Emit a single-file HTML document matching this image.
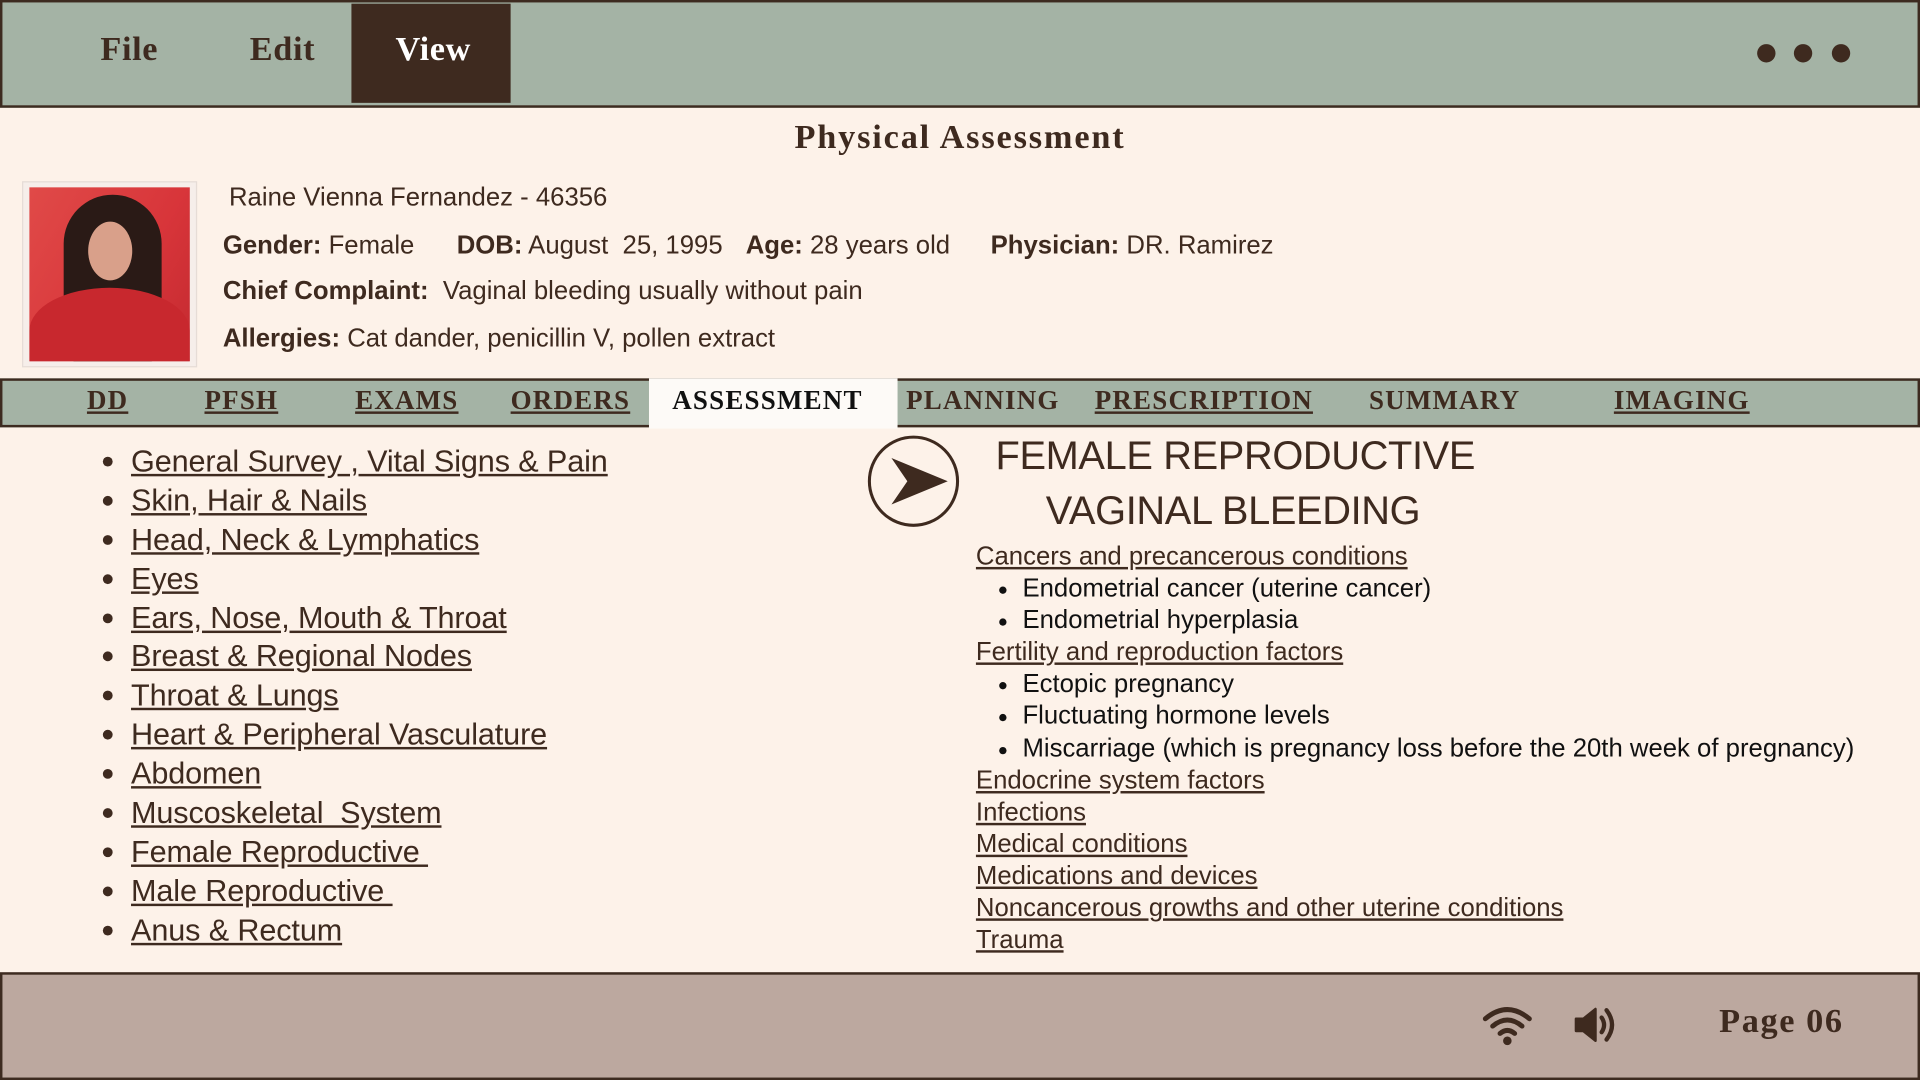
<!DOCTYPE html>
<html><head><meta charset="utf-8"><style>
*{margin:0;padding:0;box-sizing:border-box}
html,body{width:1920px;height:1080px;overflow:hidden;background:#fdf2e9}
#w{position:absolute;left:0;top:0;width:1568px;height:882px;transform:scale(1.22449);transform-origin:0 0;background:#fdf2e9;color:#3e2a1f;font-family:"Liberation Sans",sans-serif}
.a{position:absolute;white-space:nowrap}
.s{font-family:"Liberation Serif",serif;font-weight:bold}
.hdr{position:absolute;left:0;top:0;width:1568px;height:88px;background:#a4b3a5;border:2px solid #3d2b20}
.m{font-size:28px;top:25px;letter-spacing:0.5px}
.dot{position:absolute;width:15px;height:15px;border-radius:50%;background:#3e2a1f;top:36px}
.t{font-size:21px;letter-spacing:0}
.tabs{position:absolute;left:0;top:309px;width:1568px;height:40px;background:#a4b3a5;border:2px solid #3d2b20}
.tb{font-size:22px;top:314px;text-decoration:underline;letter-spacing:1px}
ul.l{position:absolute;left:107px;top:362px;list-style:none}
ul.l li{font-size:25px;height:31.9px;line-height:31px;text-decoration:underline;letter-spacing:-0.1px;position:relative}
ul.l li:before{content:"";position:absolute;left:-23px;top:11px;width:8px;height:8px;border-radius:50%;background:#3e2a1f}
.r{position:absolute;left:797px;top:442px;font-size:21px;letter-spacing:0}
.r div{height:26.1px;line-height:26px}
.r .u{text-decoration:underline}
.r .b{padding-left:38px;position:relative;color:#111}
.r .b:before{content:"";position:absolute;left:19px;top:11px;width:6px;height:6px;border-radius:50%;background:#111}
.ftr{position:absolute;left:0;top:794px;width:1568px;height:88px;background:#bca89f;border:2px solid #3d2b20}
</style></head><body><div id="w">
<div class="hdr"></div>
<div class="a" style="left:287px;top:3px;width:130px;height:81px;background:#3e2a1f"></div>
<div class="a s m" style="left:82px">File</div>
<div class="a s m" style="left:204px">Edit</div>
<div class="a s m" style="left:323px;color:#fff">View</div>
<div class="dot" style="left:1435px"></div><div class="dot" style="left:1465px"></div><div class="dot" style="left:1496px"></div>
<div class="a s" style="left:0;width:1568px;text-align:center;top:97px;font-size:28px;letter-spacing:1.5px">Physical Assessment</div>
<div class="a" style="left:18px;top:148px;width:143px;height:152px;background:#f6eeea;border:1px solid #e6dcd6"></div>
<div class="a" style="left:24px;top:153px;width:131px;height:142px;background:linear-gradient(120deg,#e04a48,#d8353a 60%,#c42a30);overflow:hidden">
<div style="position:absolute;left:28px;top:6px;width:80px;height:140px;border-radius:40px 40px 20px 20px;background:#2a1a16"></div>
<div style="position:absolute;left:48px;top:28px;width:36px;height:48px;border-radius:50%;background:#d9a08a"></div>
<div style="position:absolute;left:0;top:82px;width:131px;height:70px;border-radius:50% 50% 0 0;background:#c8282e"></div>
</div>
<div class="a t" style="left:187px;top:150px">Raine Vienna Fernandez - 46356</div>
<div class="a t" style="left:182px;top:189px"><b>Gender:</b> Female</div>
<div class="a t" style="left:373px;top:189px"><b>DOB:</b> August&nbsp; 25, 1995</div>
<div class="a t" style="left:609px;top:189px"><b>Age:</b> 28 years old</div>
<div class="a t" style="left:809px;top:189px"><b>Physician:</b> DR. Ramirez</div>
<div class="a t" style="left:182px;top:226px"><b>Chief Complaint:</b>&nbsp; Vaginal bleeding usually without pain</div>
<div class="a t" style="left:182px;top:265px"><b>Allergies:</b> Cat dander, penicillin V, pollen extract</div>
<div class="tabs"></div>
<div class="a" style="left:530px;top:309px;width:203px;height:41px;background:#fdfaf7"></div>
<div class="a s tb" style="left:71px">DD</div>
<div class="a s tb" style="left:167px">PFSH</div>
<div class="a s tb" style="left:290px">EXAMS</div>
<div class="a s tb" style="left:417px">ORDERS</div>
<div class="a s tb" style="left:549px;text-decoration:none;color:#111">ASSESSMENT</div>
<div class="a s tb" style="left:740px;text-decoration:none">PLANNING</div>
<div class="a s tb" style="left:894px">PRESCRIPTION</div>
<div class="a s tb" style="left:1118px;text-decoration:none">SUMMARY</div>
<div class="a s tb" style="left:1318px">IMAGING</div>
<ul class="l">
<li>General Survey , Vital Signs &amp; Pain</li><li>Skin, Hair &amp; Nails</li><li>Head, Neck &amp; Lymphatics</li><li>Eyes</li><li>Ears, Nose, Mouth &amp; Throat</li><li>Breast &amp; Regional Nodes</li><li>Throat &amp; Lungs</li><li>Heart &amp; Peripheral Vasculature</li><li>Abdomen</li><li>Muscoskeletal&nbsp; System</li><li>Female Reproductive&nbsp;</li><li>Male Reproductive&nbsp;</li><li>Anus &amp; Rectum</li>
</ul>
<svg class="a" style="left:708px;top:355px" width="76" height="76" viewBox="0 0 76 76"><circle cx="38" cy="38" r="36" fill="none" stroke="#3e2a1f" stroke-width="2.5"/><path d="M20 19 L66 38 L20 57 L33 38 Z" fill="#3e2a1f"/></svg>
<div class="a" style="left:813px;top:354px;font-size:32.5px;letter-spacing:-0.3px">FEMALE REPRODUCTIVE</div>
<div class="a" style="left:854px;top:399px;font-size:32.5px;letter-spacing:-0.3px">VAGINAL BLEEDING</div>
<div class="r">
<div class="u">Cancers and precancerous conditions</div>
<div class="b">Endometrial cancer (uterine cancer)</div>
<div class="b">Endometrial hyperplasia</div>
<div class="u">Fertility and reproduction factors</div>
<div class="b">Ectopic pregnancy</div>
<div class="b">Fluctuating hormone levels</div>
<div class="b">Miscarriage (which is pregnancy loss before the 20th week of pregnancy)</div>
<div class="u">Endocrine system factors</div>
<div class="u">Infections</div>
<div class="u">Medical conditions</div>
<div class="u">Medications and devices</div>
<div class="u">Noncancerous growths and other uterine conditions</div>
<div class="u">Trauma</div>
</div>
<div class="ftr"></div>
<svg class="a" style="left:1210px;top:820px" width="42" height="34" viewBox="0 0 42 34"><g fill="none" stroke="#3e2a1f" stroke-width="4" stroke-linecap="round"><path d="M3 12 Q21 -3 39 12"/><path d="M9 18 Q21 8 33 18"/><path d="M15 24 Q21 19 27 24"/></g><circle cx="21" cy="30" r="3.5" fill="#3e2a1f"/></svg>
<svg class="a" style="left:1284px;top:820px" width="40" height="34" viewBox="0 0 40 34"><path d="M3 12 H9 L19 4 V30 L9 22 H3 Z" fill="#3e2a1f" stroke="#3e2a1f" stroke-width="2" stroke-linejoin="round"/><g fill="none" stroke="#3e2a1f" stroke-width="3.5" stroke-linecap="round"><path d="M24 11 Q28 17 24 23"/><path d="M28 5 Q37 17 28 29"/></g></svg>
<div class="a s" style="left:1404px;top:819px;font-size:28px;letter-spacing:1.3px">Page 06</div>
</div></body></html>
